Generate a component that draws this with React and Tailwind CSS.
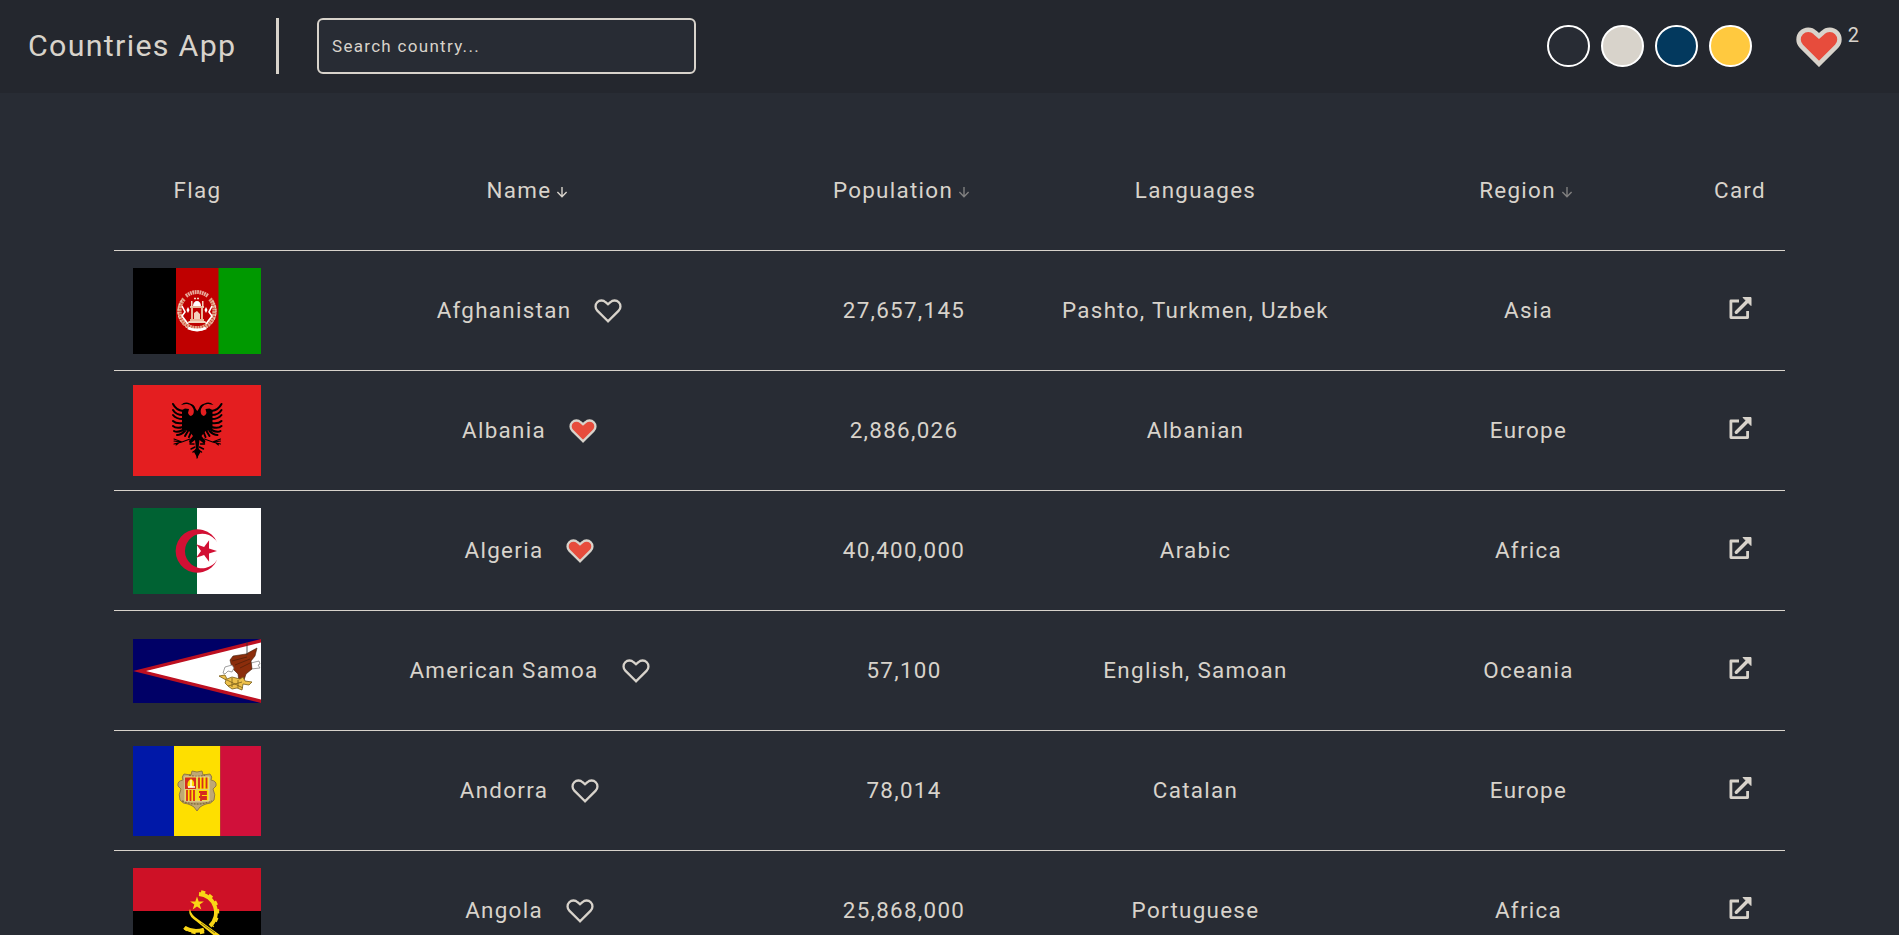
import React from "react";

const COLS = "grid grid-cols-[166px_498px_251px_332px_334px_90px] items-center justify-items-center";

function Heart({ filled, className, stroke }) {
  return (
    <svg viewBox="0 0 28 24" className={className} fill={filled ? "#e74c3c" : "none"} stroke="#d8d3cb" strokeWidth={stroke} strokeLinejoin="miter">
      <path d="M14 22.300 3.300 11.600A5.900 5.900 0 0 1 11.600 3.200L14 5.300l2.400-2.100a5.900 5.900 0 0 1 8.300 8.400Z" />
    </svg>
  );
}

function Arrow({ dim }) {
  return (
    <svg viewBox="0 0 12 12" className={dim ? "mt-0.5 mr-1 ml-[5px] size-3 opacity-50" : "mt-0.5 mr-1 ml-[5px] size-3"} fill="none" stroke="#d8d3cb" strokeWidth="1.400">
      <path d="M6 1v9.600M1.400 6 6 10.700 10.600 6" />
    </svg>
  );
}

function CardLink() {
  return (
    <svg viewBox="0 0 24 24" className="mr-px mb-1.5 size-6" fill="none" stroke="#d8d3cb" strokeWidth="2.800">
      <path d="M11 5H2.900v16.600h16.700V15" strokeLinejoin="round" />
      <path d="m8.300 16.200 11-11" strokeWidth="3.400" strokeLinecap="round" />
      <path d="M15 1.500h8v8z" fill="#d8d3cb" stroke="#d8d3cb" strokeWidth="1" strokeLinejoin="round" />
    </svg>
  );
}

function Afghanistan() {
  return (
    <svg viewBox="0 0 128 86" className="h-[86px] w-32">
      <rect width="43" height="86" fill="#000" />
      <rect x="43" width="43" height="86" fill="#bf0000" />
      <rect x="85.500" width="42.500" height="86" fill="#009900" />
      <g fill="none" stroke="#f2d9c5">
        <path d="M51 31a17.500 17.500 0 1 0 26 0" strokeWidth="4.200" stroke="#e3a183" strokeDasharray="2.200 .5" />
        <path d="M49 32a19 19 0 1 0 30 0" strokeWidth="1" strokeDasharray="3 1.200" />
        <path d="M53 28q11-8 22 0" strokeWidth="4" stroke="#e8a99a" strokeDasharray="1.800 .6" />
        <path d="M61 30.500h6" strokeWidth="1.500" strokeDasharray="2 1" />
        <path d="M55 60q9 4 18 0" stroke="#fff" strokeWidth="3" />
        <path d="m49 38 3 6-3 4 6 8M79 38l-3 6 3 4-6 8" strokeWidth="1.600" stroke="#fff" />
      </g>
      <g fill="#fff">
        <path d="M60 38a4 5 0 0 1 8 0z" />
        <path d="M57 38h14v2H57zM58 40h2v12h-2zM68 40h2v12h-2zM57 51h14v2H57z" fill="#e9b89b" />
        <path d="m61 45 3-2 3 3v5h-6zM56 53h16l2 2H54zM58 33h1.500v6H58zM69 33h1.500v6H69z" fill="#f3d3bd" />
        <path d="m55 39 1.500 3-1.500 3-1.500-3zM73 39l1.500 3-1.500 3-1.500-3z" />
      </g>
    </svg>
  );
}

function EagleHalf() {
  return (
    <g>
      <path d="M65 74 61 67l2-4-1-8-5 4-1-3 4-5-4-5-7-1V25l3-1.500 4 .5-1 4q2 5 5 1.500 2-4-1-8-2-3-6-2.500l-5 1q4-4 9-1.500 4.500 1 5.500 5l2 3h1z" />
      <g fill="none" stroke="#000" strokeWidth="2" strokeLinecap="round">
        <path d="M50 26q-7-1-10-7M50 30q-7 0-10-5M50 34q-7 0-10-4M50 38q-7 1-10-2M50 42q-7 2-10-1M50 45q-6 3-9 1M52 46q-4 4-8 4M55 46l-3 5M58 47l-2 5" />
        <path d="m57 54-8 3-8-3m8 3-8 2m6-2-6-1m6 1-4 3" strokeWidth="1.100" />
        <path d="m61 59-4 0m5 3-4 2m5 1-3 2" strokeWidth="1.500" />
      </g>
    </g>
  );
}

function Albania() {
  return (
    <svg viewBox="0 0 128 91" className="h-[91px] w-32">
      <rect width="128" height="91" fill="#e41e20" />
      <EagleHalf />
      <g transform="translate(128.500 0) scale(-1 1)">
        <EagleHalf />
      </g>
    </svg>
  );
}

function Algeria() {
  return (
    <svg viewBox="0 0 128 86" className="h-[86px] w-32">
      <rect width="128" height="86" fill="#fff" />
      <rect width="64" height="86" fill="#006233" />
      <path d="M84.300 34.500a21.700 21.700 0 1 0 0 17 17.300 17.300 0 1 1 0-17z" fill="#d21034" />
      <path d="m84 43-8 2.500.1 8.300-5-6.700-7.900 2.700 4.800-6.800-4.800-6.800 7.900 2.700 5-6.700-.1 8.300z" fill="#d21034" />
    </svg>
  );
}

function AmericanSamoa() {
  return (
    <svg viewBox="0 0 128 64" className="h-16 w-32">
      <rect width="128" height="64" fill="#006" />
      <path d="M0 32 128 0v64z" fill="#bd1021" />
      <path d="M13 32 128 3.500v57z" fill="#fff" />
      <path d="m118 24 8-2 1 3-2 1 2 3-9 1z" fill="#fff" stroke="#777" strokeWidth=".7" />
      <path d="m99 29-2-8 3-4 13-2 11-6-2 8-4 5 1 8-6 5-2 6-5 1-1-7z" fill="#8b2d0b" stroke="#41200e" strokeWidth=".6" />
      <path d="m99 22 15-4M102 26l15-6M107 29l10-5" stroke="#5a2109" strokeWidth=".9" />
      <path d="M114 3v13" stroke="#333" strokeWidth=".8" />
      <path d="m99 26-7 2-2 6 2 1 3-3 4 1 2-4z" fill="#fff" stroke="#777" strokeWidth=".7" />
      <path d="m86 37 6-1 2 4 5-2 8 2 3-2 2 4 7 1-3 3-6-1-1 6-5-2-5 1-4-3-3-3 1-3z" fill="#edc04a" stroke="#775c18" strokeWidth=".8" />
      <path d="m92 40 18 9M95 47l14-4M99 39v9M105 41v8" stroke="#775c18" strokeWidth=".8" />
    </svg>
  );
}

function Andorra() {
  return (
    <svg viewBox="0 0 128 90" className="h-[90px] w-32">
      <rect width="41" height="90" fill="#0018a8" />
      <rect x="41" width="46.500" height="90" fill="#fedf00" />
      <rect x="87.300" width="40.700" height="90" fill="#d0103a" />
      <path d="M59 25q5 2 10 0l1 4 7-1q3 3 1 6 6 1 5 6l-3 3q3 6 1 11-3 4-8 4-3 1-6 3l-3 4-3-4q-3-2-6-3-5 0-8-4-2-5 1-11l-3-3q-1-5 5-6-2-3 1-6l7 1z" fill="#bfa873" stroke="#8a7343" strokeWidth=".9" />
      <path d="M49 55q15 6 30 0M56 29q8 3 16 0" fill="none" stroke="#85703f" strokeWidth="1.500" strokeDasharray="2 1" />
      <rect x="52" y="31" width="24" height="24" fill="#fedf00" stroke="#e8d8a0" strokeWidth="1" />
      <path d="M52 31.500h11V43H52z" fill="#d52b1e" />
      <path d="M58 32.500q5 4 2 9h-5q-2-5 3-9" fill="#fedf00" />
      <path d="M58 34v7M55 41h7" stroke="#fff" strokeWidth="1.300" />
      <path d="M66 31.500v11M69.500 31.500v11M73.500 31.500v11M54 44v11M57.500 44v11M61 44v11" stroke="#d52b1e" strokeWidth="1.800" />
      <path d="M66 46h7v2h-5v2M66 51h7v2h-5v2" stroke="#d52b1e" strokeWidth="1.800" fill="none" />
      <path d="M52 43.500h24M64 31v24" stroke="#d8c68f" strokeWidth=".8" />
    </svg>
  );
}

function Angola() {
  return (
    <svg viewBox="0 0 128 86" className="h-[86px] w-32">
      <rect width="128" height="86" fill="#000" />
      <rect width="128" height="43" fill="#ce1126" />
      <path d="M66 26A18.500 18.500 0 0 1 77 58M71 61.500Q61 65 52 60" fill="none" stroke="#f9d616" strokeWidth="3.800" />
      <path d="M68 24A20.500 20.500 0 0 1 79 58M71 63.500Q60 67 51 59" fill="none" stroke="#f9d616" strokeWidth="3.600" strokeDasharray="4.200 4.200" />
      <path d="M57 41q1 6 9 11l21 15-3 3-21-17q-9-6-6-12z" fill="#f9d616" />
      <path d="m68 55 14 10" stroke="#6b5b08" strokeWidth=".8" />
      <path d="m64 28.500 1.700 4.900h5.200l-4.200 3.100 1.600 5-4.300-3-4.300 3 1.600-5-4.200-3.100h5.200z" fill="#f9d616" />
    </svg>
  );
}

const rows = [
  { Flag: Afghanistan, name: "Afghanistan", pop: "27,657,145", lang: "Pashto, Turkmen, Uzbek", region: "Asia" },
  { Flag: Albania, name: "Albania", liked: true, pop: "2,886,026", lang: "Albanian", region: "Europe" },
  { Flag: Algeria, name: "Algeria", liked: true, pop: "40,400,000", lang: "Arabic", region: "Africa" },
  { Flag: AmericanSamoa, name: "American Samoa", pop: "57,100", lang: "English, Samoan", region: "Oceania" },
  { Flag: Andorra, name: "Andorra", pop: "78,014", lang: "Catalan", region: "Europe" },
  { Flag: Angola, name: "Angola", pop: "25,868,000", lang: "Portuguese", region: "Africa" },
];

export default function App() {
  return (
    <div className="h-[935px] overflow-hidden bg-white pr-0.5 font-['Roboto',sans-serif] text-[#d8d3cb]">
      <div className="h-full overflow-hidden bg-[#282c34]">
        <header className="flex h-[93px] items-center bg-[#24272e] pb-0.5 pl-7">
          <h1 className="w-[248px] text-[30.4px] tracking-[1.3px]">Countries App</h1>
          <div className="h-14 w-[3px] bg-[#d8d3cb]" />
          <input
            placeholder="Search country..."
            className="ml-[38px] h-14 w-[379px] rounded-md border-2 border-[#d8d3cb] bg-[#282c34] px-[13px] text-[17px] tracking-[1.3px] outline-none placeholder:text-[#d8d3cb]"
          />
          <div className="ml-auto flex gap-[11px]">
            <span className="h-[42px] w-[43px] rounded-full border-2 border-white bg-[#282c34]" />
            <span className="h-[42px] w-[43px] rounded-full border-2 border-white bg-[#d8d3cb]" />
            <span className="h-[42px] w-[43px] rounded-full border-2 border-white bg-[#03395e]" />
            <span className="h-[42px] w-[43px] rounded-full border-2 border-white bg-[#ffc93f]" />
          </div>
          <div className="mr-10 ml-11 flex items-start">
            <Heart filled stroke={2.700} className="mt-0.5 h-10 w-[46px]" />
            <span className="ml-1.5 text-xl leading-5">2</span>
          </div>
        </header>
        <main className="ml-[114px] w-[1671px] pt-[37px] text-[22.4px] tracking-[1.3px]">
          <div className={COLS + " h-[121px] border-b border-[#d8d3cb] pt-0.5"}>
            <span className="pl-px">Flag</span>
            <span className="flex items-center pl-px">Name<Arrow /></span>
            <span className="flex items-center">Population<Arrow dim /></span>
            <span className="pl-px">Languages</span>
            <span className="flex items-center">Region<Arrow dim /></span>
            <span>Card</span>
          </div>
          {rows.map(({ Flag, name, liked, pop, lang, region }) => (
            <div key={name} className={COLS + " h-[120px] border-b border-[#d8d3cb]"}>
              <Flag />
              <span className="flex items-center pl-px">
                {name}
                <Heart filled={liked} stroke={2.300} className="mt-0.5 ml-[23px] h-6 w-7" />
              </span>
              <span className="pl-px">{pop}</span>
              <span className="pl-px">{lang}</span>
              <span className="pl-px">{region}</span>
              <CardLink />
            </div>
          ))}
        </main>
      </div>
    </div>
  );
}
